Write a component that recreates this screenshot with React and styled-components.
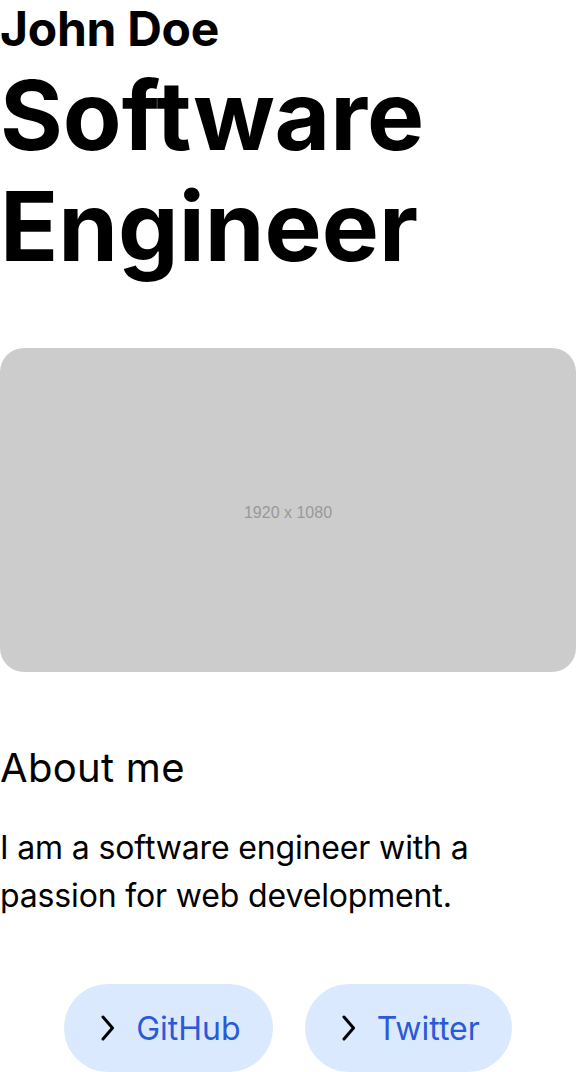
import React from "react";
import styled, { createGlobalStyle } from "styled-components";

const GlobalStyle = createGlobalStyle`
  html, body {
    margin: 0;
    padding: 0;
    background: #ffffff;
  }
  body {
    font-family: Inter, "Noto Sans", sans-serif;
    color: #000000;
  }
  * { box-sizing: border-box; }
`;

const Main = styled.main`
  display: flex;
  flex-direction: column;
  gap: 64px;
  width: 576px;
`;

const Header = styled.header`
  display: flex;
  flex-direction: column;
  gap: 2px;
  margin: 0;
`;

const Name = styled.h2`
  margin: 0;
  font-size: 48px;
  font-weight: 700;
  line-height: 58px;
  letter-spacing: -0.3px;
`;

const Title = styled.h1`
  margin: 0;
  font-size: 96px;
  font-weight: 700;
  line-height: 111px;
  letter-spacing: 0;
`;

const Placeholder = styled.div`
  margin: 2px 0;
  height: 324px;
  padding-top: 5px;
  border-radius: 24px;
  background: #cccccc;
  display: flex;
  align-items: center;
  justify-content: center;
  color: #999999;
  font-family: "Liberation Sans", Arial, sans-serif;
  font-size: 16px;
`;

const About = styled.section`
  display: flex;
  flex-direction: column;
  gap: 26px;
`;

const AboutTitle = styled.h3`
  margin: 0;
  font-size: 40px;
  font-weight: 400;
  line-height: 60px;
  letter-spacing: 0.3px;
`;

const AboutText = styled.p`
  margin: 0;
  font-size: 32px;
  font-weight: 400;
  line-height: 48px;
  letter-spacing: -0.15px;
`;

const Links = styled.nav`
  display: flex;
  justify-content: center;
  gap: 32px;
`;

const LinkButton = styled.a`
  display: flex;
  align-items: center;
  gap: 16px;
  height: 88px;
  padding: 0 32px;
  border-radius: 9999px;
  background: #dbe9fe;
  color: #2b5ad6;
  font-size: 32px;
  font-weight: 400;
  text-decoration: none;
`;

const Chevron = () => (
  <svg width="24" height="32" viewBox="0 0 24 32" fill="none" aria-hidden="true">
    <polyline
      points="7,5 16.5,16 7,27"
      stroke="#000000"
      strokeWidth="3"
      strokeLinecap="round"
      strokeLinejoin="round"
    />
  </svg>
);

const links = [
  { label: "GitHub", href: "#" },
  { label: "Twitter", href: "#" },
];

export default function App() {
  return (
    <>
      <GlobalStyle />
      <Main>
        <Header>
          <Name>John Doe</Name>
          <Title>
            Software
            <br />
            Engineer
          </Title>
        </Header>
        <Placeholder>1920 x 1080</Placeholder>
        <About>
          <AboutTitle>About me</AboutTitle>
          <AboutText>
            I am a software engineer with a passion for web development.
          </AboutText>
        </About>
        <Links>
          {links.map((l) => (
            <LinkButton key={l.label} href={l.href}>
              <Chevron />
              {l.label}
            </LinkButton>
          ))}
        </Links>
      </Main>
    </>
  );
}
